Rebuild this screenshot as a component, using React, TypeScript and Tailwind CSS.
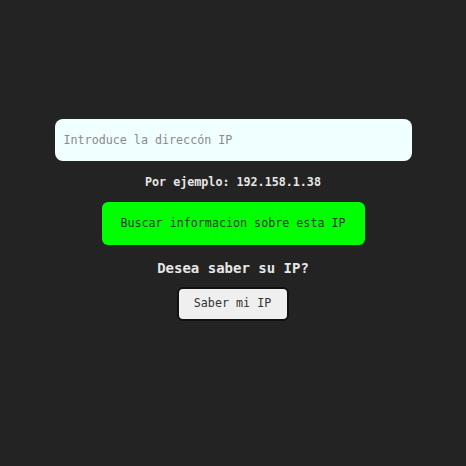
import React, { useState } from 'react';

const mono = "font-['DejaVu_Sans_Mono',monospace]";

const App: React.FC = () => {
  const [ip, setIp] = useState('');

  return (
    <div className={`min-h-[466px] w-full bg-[#232323] flex flex-col items-center pt-[119px] ${mono}`}>
      <input
        value={ip}
        onChange={(e) => setIp(e.target.value)}
        placeholder="Introduce la direccón IP"
        className="w-[357px] h-[42px] rounded-lg bg-[#f0ffff] pl-[9px] text-[11.7px] text-[#222] placeholder:text-[#8a8a8a] outline-none"
      />
      <p className="mt-[14px] h-[14px] leading-[14px] text-[11.7px] font-semibold text-[#e6e6e6]">
        Por ejemplo: 192.158.1.38
      </p>

      {/* Search button */}
      <button className="mt-[13px] w-[263px] h-[43px] rounded-md bg-[#00ff00] text-[11.7px] text-[#1e3a1e]">
        Buscar informacion sobre esta IP
      </button>

      <h3 className="mt-[15px] h-[17px] leading-[17px] text-[14px] font-semibold text-[#e6e6e6]">
        Desea saber su IP?
      </h3>

      <button className="mt-[10px] ml-[-1px] w-[112px] h-[34px] rounded-md bg-[#efefef] border-2 border-[#111] text-[11.7px] text-[#333]">
        Saber mi IP
      </button>
    </div>
  );
};

export default App;
